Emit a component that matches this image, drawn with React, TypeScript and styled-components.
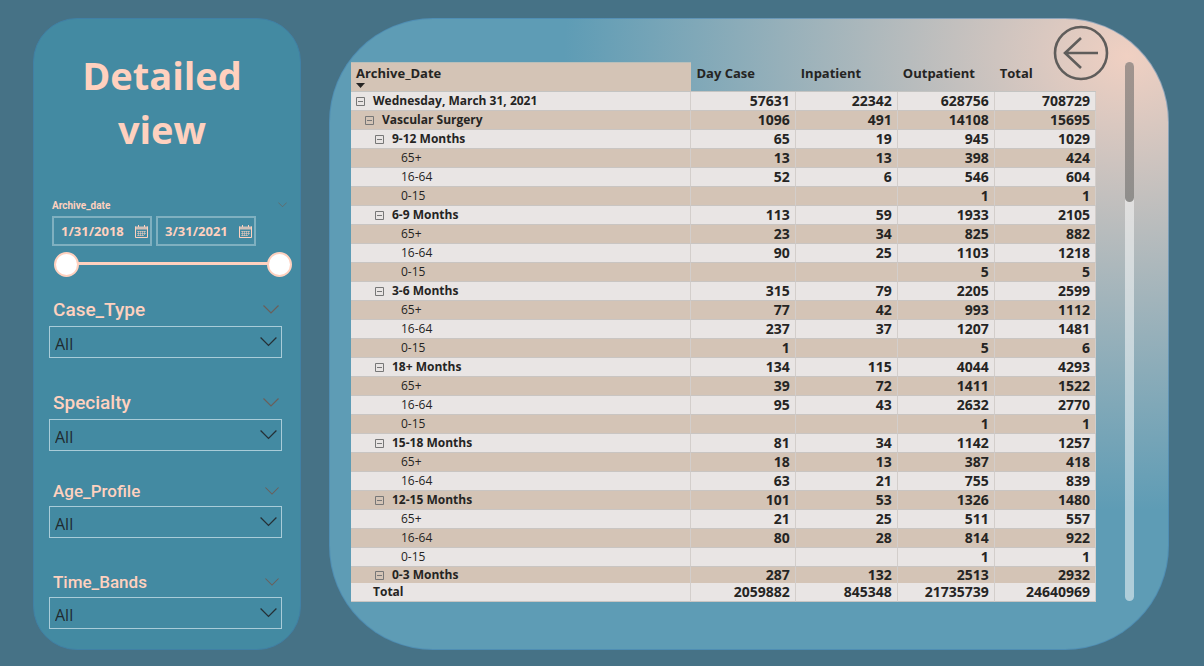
import React from 'react';
import styled, { createGlobalStyle, css } from 'styled-components';

const Global = createGlobalStyle`
  *, *::before, *::after { box-sizing: border-box; }
  body {
    margin: 0;
    background: #467286;
    font-family: "Open Sans", "Noto Sans", sans-serif;
    color: #252423;
  }
`;

const Page = styled.div`
  display: grid;
  grid-template-columns: 268px minmax(0, 1fr);
  gap: 28px;
  min-height: 100vh;
  padding: 18px 35px 16px 33px;
`;

const Sidebar = styled.aside`
  border: 1px solid #4080a5;
  border-radius: 44px;
  background: #438aa2;
  padding: 29px 8px 18px 15px;
`;

const Title = styled.h1`
  margin: 0 17px 42px 0;
  padding: 0 20px;
  font-size: 38px;
  line-height: 54px;
  font-weight: 700;
  text-align: center;
  color: #ffd1bf;
`;

const DateSlicer = styled.section`
  padding-left: 3px;
`;

const SlicerHead = styled.div<{ $height: number }>`
  display: flex;
  align-items: center;
  justify-content: space-between;
  height: ${(p) => p.$height}px;
  color: #6b5f5a;
`;

const SlicerLabel = styled.label<{ $size: number; $bold?: boolean }>`
  font-family: Roboto, sans-serif;
  font-size: ${(p) => p.$size}px;
  font-weight: ${(p) => (p.$bold ? 700 : 500)};
  color: #ffd1bf;
`;

const DateHead = styled(SlicerHead)`
  padding-right: 5px;
`;

const DateRow = styled.div`
  display: flex;
  gap: 4px;
  margin-top: 4px;
`;

const DateBox = styled.div`
  display: flex;
  align-items: center;
  width: 100px;
  height: 30px;
  padding: 0 2px 0 7px;
  border: 2px solid #7fb0c0;
  color: #ffd1bf;
`;

const DateInput = styled.input`
  flex: 1;
  min-width: 0;
  padding: 0;
  border: 0;
  outline: 0;
  background: none;
  color: inherit;
  font: 700 13px/18px "Open Sans", sans-serif;
`;

const Range = styled.div`
  position: relative;
  height: 26px;
  margin: 5px 0 0 2px;
  &::before {
    content: "";
    position: absolute;
    inset: 11px 12px auto;
    height: 3px;
    background: #ffd1bf;
  }
`;

const RangeInput = styled.input`
  position: absolute;
  inset: 0;
  width: 100%;
  height: 26px;
  margin: 0;
  appearance: none;
  background: none;
  pointer-events: none;
  &::-webkit-slider-thumb {
    appearance: none;
    width: 25px;
    height: 25px;
    border: 2px solid #ffd1bf;
    border-radius: 50%;
    background: #fff;
    pointer-events: auto;
  }
`;

const Slicer = styled.section<{ $top: number }>`
  margin-top: ${(p) => p.$top}px;
  padding-right: 10px;
  ${SlicerHead} { padding: 0 3px 0 4px; }
`;

const SelectBox = styled.div`
  position: relative;
  margin-top: 4px;
  color: #252f35;
  svg { position: absolute; right: 5px; top: 11px; pointer-events: none; }
`;

const Select = styled.select`
  display: block;
  width: 100%;
  height: 32px;
  padding: 3px 5px 0;
  border: 1px solid #a9ccd8;
  border-radius: 0;
  appearance: none;
  background: none;
  color: #1f2a30;
  font: 400 16px/24px "Open Sans", sans-serif;
`;

const Main = styled.main`
  position: relative;
  display: flex;
  align-items: flex-start;
  gap: 29px;
  padding: 43px 34px 0 21px;
  border: 1px solid rgba(64, 128, 180, 0.5);
  border-radius: 104px;
  background: radial-gradient(ellipse 67% 72% at 95% 6%, #f0d0c2 0, #5e9cb5 100%) border-box;
`;

const BackButton = styled.button`
  position: absolute;
  top: 6px;
  right: 59px;
  width: 56px;
  height: 56px;
  padding: 0;
  border: 0;
  background: none;
  cursor: pointer;
`;

const Table = styled.table`
  flex: 1;
  border-collapse: separate;
  border-spacing: 0;
  table-layout: fixed;
  width: 100%;
  font-size: 12px;
  line-height: 18px;
`;

const HeadCell = styled.th<{ $first?: boolean }>`
  height: 30px;
  padding: 2px 5px 0;
  text-align: left;
  vertical-align: top;
  font-size: 13px;
  font-weight: 700;
  border-bottom: 1px solid #c4c4c2;
  ${(p) => p.$first && css`
    background: #d4c4b6;
    border-top: 1px solid #b9bfba;
    padding-top: 1px;
  `}
  svg { display: block; margin-top: 1px; }
`;

const Row = styled.tr<{ $tan: boolean; $clip?: boolean }>`
  height: ${(p) => (p.$clip ? 16 : 19)}px;
  background: ${(p) => (p.$tan ? '#d4c4b6' : '#e9e5e4')};
`;

const cell = css<{ $clip?: boolean }>`
  padding: 0 4px;
  border-bottom: ${(p) => (p.$clip ? 0 : 1)}px solid #c9c5c2;
  border-right: 1px solid #d3cecb;
`;

const RowHead = styled.th<{ $level: number; $clip?: boolean }>`
  ${cell}
  text-align: left;
  font-weight: ${(p) => (p.$level === 3 ? 400 : 700)};
`;

const indents = [1, 10, 20, 46, 18];

const RowLabel = styled.div<{ $level: number; $clip?: boolean }>`
  display: flex;
  align-items: center;
  gap: 8px;
  height: ${(p) => (p.$clip ? 16 : 18)}px;
  overflow: hidden;
  padding-left: ${(p) => indents[p.$level]}px;
`;

const Toggle = styled.button`
  display: flex;
  flex: none;
  width: 9px;
  height: 9px;
  padding: 0;
  border: 0;
  background: none;
`;

const Num = styled.td<{ $clip?: boolean }>`
  ${cell}
  padding-right: 5px;
  text-align: right;
  font-size: 14px;
  font-weight: 700;
  line-height: ${(p) => (p.$clip ? 16 : 18)}px;
`;

const Scroll = styled.div`
  flex: none;
  width: 9px;
  height: 539px;
  border-radius: 5px;
  background: rgba(255, 255, 255, 0.5);
`;

const Thumb = styled.div`
  height: 140px;
  border-radius: 5px;
  background: linear-gradient(#a1948e, #8f8e8c);
`;

const Chevron = ({ w }: { w: number }) => (
  <svg width={w} height={w / 2 + 1} viewBox="0 0 16 9" fill="none" stroke="currentColor" strokeWidth="1.2" aria-hidden="true">
    <path d="M.5.5 8 8 15.5.5" />
  </svg>
);

const CalendarIcon = () => (
  <svg width="13" height="13" viewBox="0 0 13 13" fill="none" stroke="currentColor" aria-hidden="true">
    <path d="M0 1.500h13v3H0z" fill="currentColor" stroke="none" fillOpacity=".75" />
    <path d="M.5 1.500v11h12v-11M3.500 0v2M9.500 0v2" />
    <path d="M2 6.500h9M2 8.500h9M2 10.500h7M3.500 6v5M5.500 6v5M7.500 6v5M9.500 6v4" strokeOpacity=".5" />
  </svg>
);

type Entry = [number, string, string, string, string, string];
const rows: Entry[] = [
  [0, 'Wednesday, March 31, 2021', '57631', '22342', '628756', '708729'],
  [1, 'Vascular Surgery', '1096', '491', '14108', '15695'],
  [2, '9-12 Months', '65', '19', '945', '1029'],
  [3, '65+', '13', '13', '398', '424'],
  [3, '16-64', '52', '6', '546', '604'],
  [3, '0-15', '', '', '1', '1'],
  [2, '6-9 Months', '113', '59', '1933', '2105'],
  [3, '65+', '23', '34', '825', '882'],
  [3, '16-64', '90', '25', '1103', '1218'],
  [3, '0-15', '', '', '5', '5'],
  [2, '3-6 Months', '315', '79', '2205', '2599'],
  [3, '65+', '77', '42', '993', '1112'],
  [3, '16-64', '237', '37', '1207', '1481'],
  [3, '0-15', '1', '', '5', '6'],
  [2, '18+ Months', '134', '115', '4044', '4293'],
  [3, '65+', '39', '72', '1411', '1522'],
  [3, '16-64', '95', '43', '2632', '2770'],
  [3, '0-15', '', '', '1', '1'],
  [2, '15-18 Months', '81', '34', '1142', '1257'],
  [3, '65+', '18', '13', '387', '418'],
  [3, '16-64', '63', '21', '755', '839'],
  [2, '12-15 Months', '101', '53', '1326', '1480'],
  [3, '65+', '21', '25', '511', '557'],
  [3, '16-64', '80', '28', '814', '922'],
  [3, '0-15', '', '', '1', '1'],
  [2, '0-3 Months', '287', '132', '2513', '2932'],
];

const slicers = [
  { name: 'Case_Type', size: 19, top: 19, head: 26, icon: 16 },
  { name: 'Specialty', size: 19, top: 31, head: 26, icon: 16 },
  { name: 'Age_Profile', size: 17, top: 29, head: 22, icon: 14 },
  { name: 'Time_Bands', size: 17, top: 33, head: 22, icon: 14 },
];

const Col = styled.col<{ $width?: string }>`
  width: ${(p) => p.$width ?? 'auto'};
`;

export default function App() {
  return (
    <Page>
      <Global />
      <Sidebar>
        <Title>Detailed view</Title>
        <DateSlicer>
          <DateHead $height={14}>
            <SlicerLabel $size={10} $bold htmlFor="from">Archive_date</SlicerLabel>
            <Chevron w={9} />
          </DateHead>
          <DateRow>
            <DateBox>
              <DateInput id="from" defaultValue="1/31/2018" />
              <CalendarIcon />
            </DateBox>
            <DateBox>
              <DateInput aria-label="End date" defaultValue="3/31/2021" />
              <CalendarIcon />
            </DateBox>
          </DateRow>
          <Range>
            <RangeInput type="range" aria-label="Range start" defaultValue={0} />
            <RangeInput type="range" aria-label="Range end" defaultValue={100} />
          </Range>
        </DateSlicer>
        {slicers.map((s) => (
          <Slicer key={s.name} $top={s.top}>
            <SlicerHead $height={s.head}>
              <SlicerLabel $size={s.size} htmlFor={s.name}>{s.name}</SlicerLabel>
              <Chevron w={s.icon} />
            </SlicerHead>
            <SelectBox>
              <Select id={s.name}><option>All</option></Select>
              <Chevron w={17} />
            </SelectBox>
          </Slicer>
        ))}
      </Sidebar>
      <Main>
        <Table>
          <colgroup>
            <Col />
            <Col $width="14%" />
            <Col $width="13.7%" />
            <Col $width="13%" />
            <Col $width="13.6%" />
          </colgroup>
          <thead>
            <tr>
              <HeadCell $first>
                Archive_Date
                <svg width="9" height="5" viewBox="0 0 9 5" aria-hidden="true"><path d="M0 0h9L4.500 5z" fill="#252423" /></svg>
              </HeadCell>
              <HeadCell>Day Case</HeadCell>
              <HeadCell>Inpatient</HeadCell>
              <HeadCell>Outpatient</HeadCell>
              <HeadCell>Total</HeadCell>
            </tr>
          </thead>
          <tbody>
            {rows.map(([level, label, ...values], i) => {
              const clip = i === rows.length - 1;
              return (
                <Row key={i} $tan={i % 2 === 1} $clip={clip}>
                  <RowHead $level={level} $clip={clip} scope="row">
                    <RowLabel $level={level} $clip={clip}>
                      {level < 3 && (
                        <Toggle aria-label="Collapse">
                          <svg width="9" height="9" viewBox="0 0 9 9" fill="none" stroke="#777"><path d="M.5.5h8v8h-8zM2 4.500h5" /></svg>
                        </Toggle>
                      )}
                      {label}
                    </RowLabel>
                  </RowHead>
                  {values.map((v, j) => (
                    <Num key={j} $clip={clip}>{v}</Num>
                  ))}
                </Row>
              );
            })}
          </tbody>
          <tfoot>
            <Row $tan={false}>
              <RowHead $level={4} scope="row"><RowLabel $level={4}>Total</RowLabel></RowHead>
              {['2059882', '845348', '21735739', '24640969'].map((v) => <Num key={v}>{v}</Num>)}
            </Row>
          </tfoot>
        </Table>
        <Scroll><Thumb /></Scroll>
        <BackButton aria-label="Back">
          <svg width="56" height="56" viewBox="0 0 56 56" fill="none" stroke="#5f5d5b" strokeWidth="2.600">
            <circle cx="28" cy="28" r="26" />
            <path d="M45 28H12M28 13 12 28l16 15" />
          </svg>
        </BackButton>
      </Main>
    </Page>
  );
}
